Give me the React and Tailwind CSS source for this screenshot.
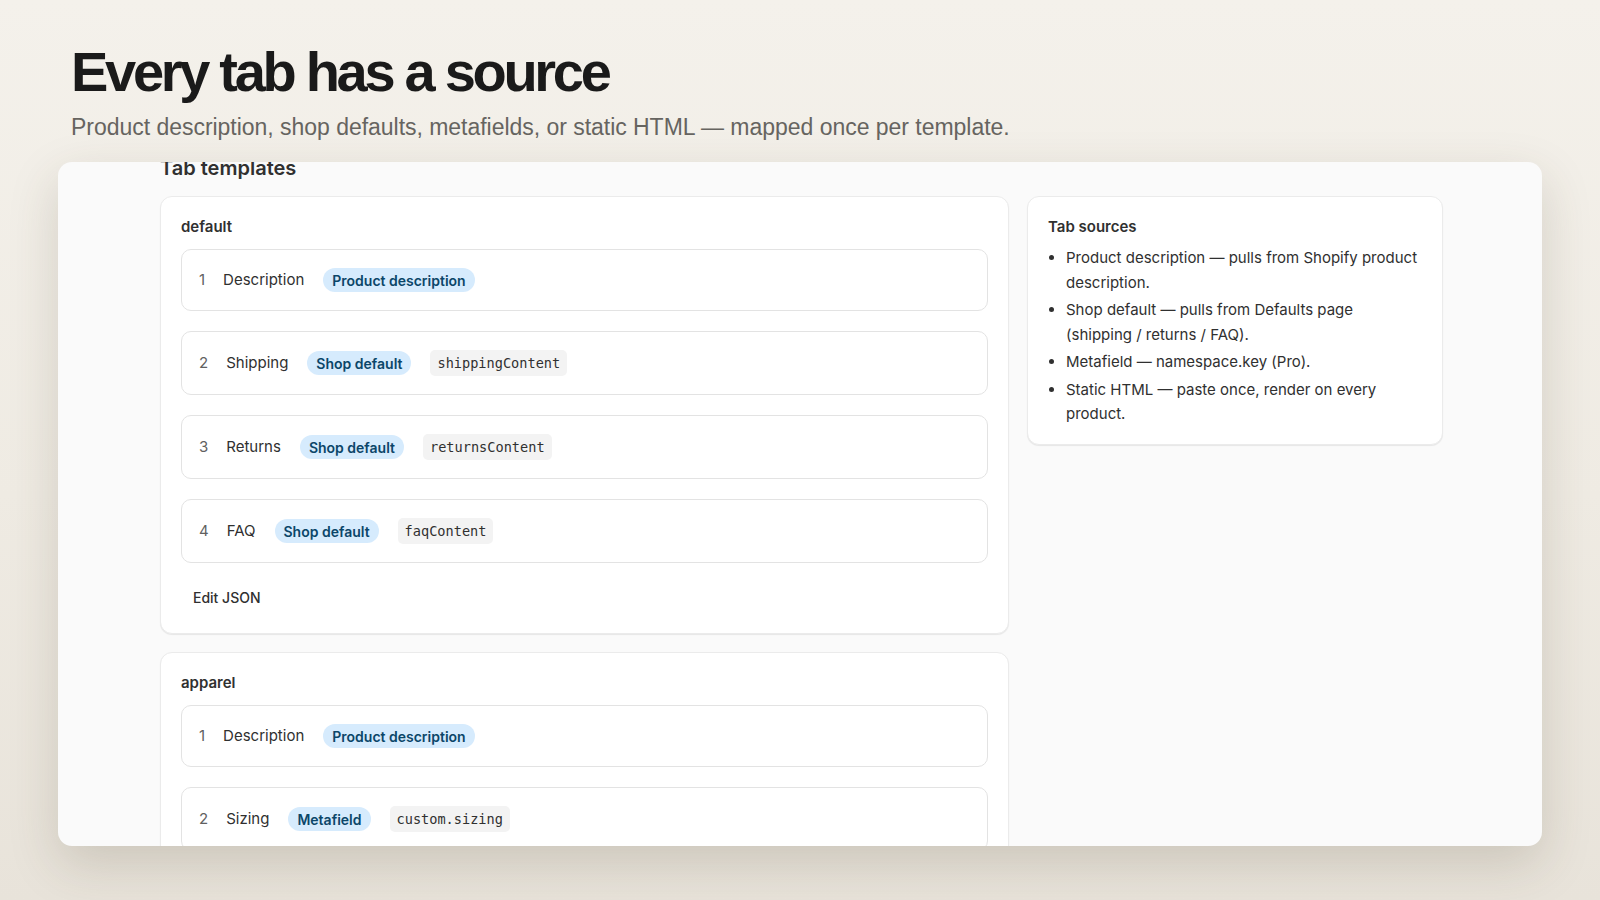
import React from "react";

const inter = { fontFamily: "Inter, 'Noto Sans', sans-serif" };

function Badge({ children }) {
  return (
    <span className="inline-flex h-6 items-center rounded-full bg-[#d6ebfd] px-[9px] text-[14px] font-semibold text-[#0b4669]">
      {children}
    </span>
  );
}

function Code({ children }) {
  return (
    <span
      className="inline-flex h-[26px] items-center rounded-[5px] bg-[#f3f3f3] px-[7px] text-[13.6px] text-[#303030]"
      style={{ fontFamily: "'DejaVu Sans Mono', 'Liberation Mono', monospace" }}
    >
      {children}
    </span>
  );
}

function Row({ n, label, source, code }) {
  return (
    <div className="flex items-center rounded-[10px] border border-[#e3e3e3] bg-white px-[17px] py-[18px] text-[15px]">
      <span className="text-[#616161]">{n}</span>
      <span className="ml-[18px] text-[#303030]">{label}</span>
      <span className="ml-[19px]">
        <Badge>{source}</Badge>
      </span>
      {code && (
        <span className="ml-[19px]">
          <Code>{code}</Code>
        </span>
      )}
    </div>
  );
}

function TemplateCard({ name, rows, edit }) {
  return (
    <div className="rounded-[12px] border border-[#ebebeb] bg-white p-5 shadow-[0_1px_1px_rgba(0,0,0,0.08)]">
      <div className="text-[15px] font-semibold leading-5 text-[#303030]">{name}</div>
      <div className="mt-3 flex flex-col gap-5">
        {rows.map((r) => (
          <Row key={r.n} {...r} />
        ))}
      </div>
      {edit && (
        <button className="mt-[18px] flex h-8 items-center px-3 text-[14px] font-medium text-[#303030]">
          Edit JSON
        </button>
      )}
    </div>
  );
}

export default function App() {
  return (
    <div className="h-[900px] w-full overflow-hidden bg-[linear-gradient(180deg,#f4f1eb_0%,#efebe3_55%,#e8e3da_100%)]">
      <div className="px-[71px] pt-[44px]" style={{ fontFamily: "'Liberation Sans', Arial, sans-serif" }}>
        <h1 className="text-[56px] font-bold leading-none tracking-[-3.3px] text-[#1a1a1a]">
          Every tab has a source
        </h1>
        <p className="mt-[14px] text-[23px] leading-[26px] tracking-[-0.03px] text-[#666460]">
          Product description, shop defaults, metafields, or static HTML — mapped once per template.
        </p>
      </div>

      <div
        className="mx-[58px] mt-[22px] h-[684px] overflow-hidden rounded-[14px] bg-[#fafafa] shadow-[0_18px_50px_rgba(70,60,40,0.18)]"
        style={inter}
      >
        <div className="mt-[-6px] pl-[102px] pr-[99px]">
          <h2 className="text-[20px] font-semibold leading-6 text-[#303030]">Tab templates</h2>
          <div className="mt-4 flex items-start gap-[18px]">
            <div className="flex flex-1 flex-col gap-[18px]">
              <TemplateCard
                name="default"
                edit
                rows={[
                  { n: 1, label: "Description", source: "Product description" },
                  { n: 2, label: "Shipping", source: "Shop default", code: "shippingContent" },
                  { n: 3, label: "Returns", source: "Shop default", code: "returnsContent" },
                  { n: 4, label: "FAQ", source: "Shop default", code: "faqContent" },
                ]}
              />
              <TemplateCard
                name="apparel"
                rows={[
                  { n: 1, label: "Description", source: "Product description" },
                  { n: 2, label: "Sizing", source: "Metafield", code: "custom.sizing" },
                ]}
              />
            </div>
            <div className="w-[416px] rounded-[12px] border border-[#ebebeb] bg-white px-5 pb-[17px] pt-[22px] shadow-[0_1px_1px_rgba(0,0,0,0.08)]">
              <div className="text-[15px] font-semibold leading-4 text-[#303030]">Tab sources</div>
              <ul className="mt-[11px] flex list-disc flex-col gap-[3px] pl-[18px] text-[15px] leading-[24.5px] text-[#303030]">
                <li>Product description — pulls from Shopify product description.</li>
                <li>Shop default — pulls from Defaults page (shipping / returns / FAQ).</li>
                <li>Metafield — namespace.key (Pro).</li>
                <li>Static HTML — paste once, render on every product.</li>
              </ul>
            </div>
          </div>
        </div>
      </div>
    </div>
  );
}
